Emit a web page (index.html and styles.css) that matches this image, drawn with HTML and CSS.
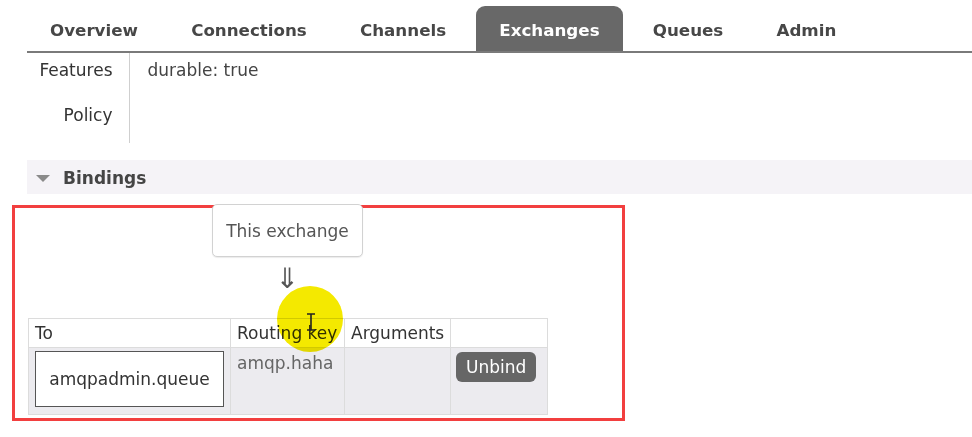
FILE: index.html
```html
<!DOCTYPE html>
<html>
<head>
<meta charset="utf-8">
<link rel="stylesheet" href="styles.css">
</head>
<body>
<div class="page">
  <nav class="tabs">
    <div class="tab">Overview</div>
    <div class="tab">Connections</div>
    <div class="tab">Channels</div>
    <div class="tab active">Exchanges</div>
    <div class="tab">Queues</div>
    <div class="tab">Admin</div>
  </nav>

  <table class="facts">
    <tr><th>Features</th><td>durable: true</td></tr>
    <tr><th>Policy</th><td></td></tr>
  </table>

  <div class="section-head"><span class="tri"></span>Bindings</div>

  <div class="bindings">
    <div class="exbox">This exchange</div>
    <div class="arrow">⇓</div>
    <table class="list">
      <thead>
        <tr><th class="c1">To</th><th class="c2">Routing key</th><th class="c3">Arguments</th><th class="c4"></th></tr>
      </thead>
      <tbody>
        <tr>
          <td class="c1"><div class="qbox">amqpadmin.queue</div></td>
          <td class="c2 key">amqp.haha</td>
          <td class="c3"></td>
          <td class="c4"><span class="btn">Unbind</span></td>
        </tr>
      </tbody>
    </table>
  </div>

  <div class="annot"></div>
  <div class="spot"></div>
  <svg class="ibeam" width="10" height="18" viewBox="0 0 10 18"><path d="M1 1h8M5 1v16M1 17h8" stroke="#222" stroke-width="1.6" fill="none"/></svg>
</div>
</body>
</html>
```

FILE: styles.css
```css
html, body {
  margin: 0;
  background: #fff;
}
body {
  font-family: "DejaVu Sans", Verdana, sans-serif;
  font-size: 17px;
  color: #444;
}
.page {
  position: relative;
  padding: 6px 0 0 27px;
  height: 431px;
}
.tabs {
  display: flex;
  gap: 7.2px;
  border-bottom: 2px solid #7a7a7a;
}
.tab {
  height: 45px;
  padding: 2px 23px 0;
  box-sizing: border-box;
  display: flex;
  align-items: center;
  font-size: 16.7px;
  font-weight: bold;
  color: #474747;
  border-radius: 9px 9px 0 0;
}
.tab.active {
  background: #686868;
  color: #fff;
}
.facts {
  border-collapse: collapse;
}
.facts th, .facts td {
  height: 45px;
  box-sizing: border-box;
  padding: 7px 0 0;
  line-height: 20px;
  vertical-align: top;
}
.facts th {
  width: 102px;
  text-align: right;
  font-weight: normal;
  color: #333;
  padding-right: 16px;
  border-right: 1px solid #cfcfcf;
}
.facts td {
  padding-left: 18px;
  color: #444;
}
.section-head {
  margin-top: 17px;
  height: 34px;
  padding-top: 1px;
  box-sizing: border-box;
  background: #f5f3f7;
  display: flex;
  align-items: center;
  font-weight: bold;
  color: #454545;
}
.tri {
  width: 0;
  height: 0;
  border-left: 7px solid transparent;
  border-right: 7px solid transparent;
  border-top: 7px solid #8a8a8a;
  margin: 1px 13px 0 9px;
}
.bindings {
  width: 519px;
  margin: 10px 0 0 1px;
  display: flex;
  flex-direction: column;
  align-items: center;
}
.exbox {
  position: relative;
  z-index: 2;
  background: #fff;
  border: 1px solid #d2d2d2;
  border-radius: 5px;
  box-shadow: 0 1px 1px rgba(0,0,0,0.08);
  padding: 16px 13px 15px;
  line-height: 20px;
  color: #555;
}
.arrow {
  margin-top: 9px;
  font-size: 28px;
  line-height: 26px;
  color: #555;
}
.list {
  margin-top: 26px;
  border-collapse: collapse;
  align-self: stretch;
  table-layout: fixed;
  width: 519px;
}
.list th, .list td {
  border: 1px solid #dcdcdc;
  vertical-align: top;
  line-height: 20px;
}
.list th {
  background: #fff;
  font-weight: normal;
  text-align: left;
  color: #333;
  height: 29px;
  box-sizing: border-box;
  padding: 4px 6px;
}
.list td {
  background: #ecebef;
  height: 67px;
  box-sizing: border-box;
  padding: 3px 6px;
}
.c1 { width: 202px; }
.c2 { width: 114px; }
.c3 { width: 106px; }
.c4 { width: 97px; }
.list td.c1 { padding: 3px 6px 7px; }
.qbox {
  background: #fff;
  border: 1px solid #555;
  height: 56px;
  box-sizing: border-box;
  display: flex;
  align-items: center;
  justify-content: center;
  color: #333;
}
.list td.key {
  color: #666;
  padding-top: 5px;
}
.list td.c4 { padding: 4px 5px; }
.btn {
  display: inline-block;
  background: #666;
  color: #fff;
  border-radius: 6px;
  padding: 5px 10px;
  line-height: 20px;
}
.annot {
  position: absolute;
  z-index: 1;
  left: 12px;
  top: 205px;
  width: 613px;
  height: 216px;
  box-sizing: border-box;
  border: 3px solid #f23f3f;
}
.spot {
  position: absolute;
  z-index: 3;
  left: 277px;
  top: 286px;
  width: 66px;
  height: 66px;
  border-radius: 50%;
  background: #f4e900;
  mix-blend-mode: multiply;
}
.ibeam {
  position: absolute;
  z-index: 4;
  left: 306px;
  top: 313px;
}
```
